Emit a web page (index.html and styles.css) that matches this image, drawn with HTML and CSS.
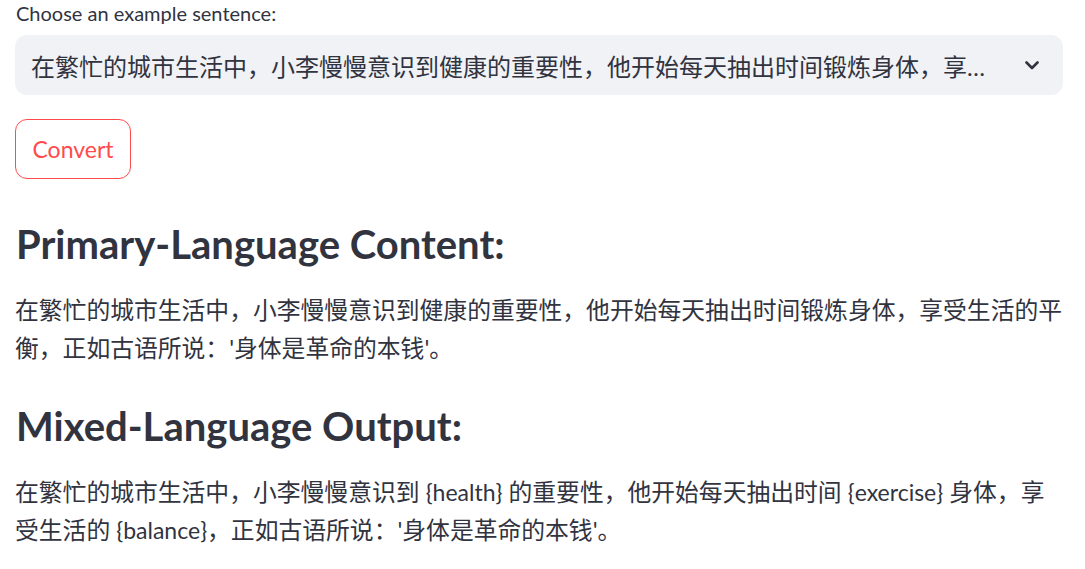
FILE: index.html
```html
<!DOCTYPE html>
<html lang="zh">
<head>
<meta charset="utf-8">
<title>Mixed-Language Converter</title>
<link rel="stylesheet" href="styles.css">
</head>
<body>
<main class="main">
  <div class="field">
    <label class="label">Choose an example sentence:</label>
    <div class="select">
      <span class="select-value">在繁忙的城市生活中，小李慢慢意识到健康的重要性，他开始每天抽出时间锻炼身体，享受生活的平衡，正如古语所说：'身体是革命的本钱'。</span>
      <span class="select-icon">
        <svg width="14" height="9" viewBox="0 0 14 9"><polyline points="1.5,1.5 7,7 12.5,1.5" fill="none" stroke="#31333F" stroke-width="2.6" stroke-linecap="round" stroke-linejoin="round"/></svg>
      </span>
    </div>
  </div>
  <div class="btn-row">
    <button class="btn">Convert</button>
  </div>
  <h3 class="heading first">Primary-Language Content:</h3>
  <p class="para">在繁忙的城市生活中，小李慢慢意识到健康的重要性，他开始每天抽出时间锻炼身体，享受生活的平衡，正如古语所说：'身体是革命的本钱'。</p>
  <h3 class="heading">Mixed-Language Output:</h3>
  <p class="para">在繁忙的城市生活中，小李慢慢意识到 <span class="var">{health}</span> 的重要性，他开始每天抽出时间 <span class="var">{exercise}</span> 身体，享受生活的 <span class="var">{balance}</span>，正如古语所说：'身体是革命的本钱'。</p>
</main>
</body>
</html>
```
FILE: styles.css
```css
html, body {
  margin: 0;
  padding: 0;
  background: #ffffff;
}
body {
  font-family: Lato, "Noto Sans CJK SC", sans-serif;
  color: #31333F;
}
.main {
  padding: 0 22px 0 15px;
}
.field {
  display: flex;
  flex-direction: column;
}
.label {
  font-size: 20px;
  line-height: 26px;
  margin-bottom: 9px;
  padding-left: 1px;
}
.select {
  display: flex;
  align-items: center;
  height: 60px;
  background: #F0F2F6;
  border-radius: 12px;
}
.select-value {
  flex: 1;
  min-width: 0;
  padding-left: 16px;
  font-size: 24px;
  white-space: nowrap;
  overflow: hidden;
  text-overflow: ellipsis;
}
.select-icon {
  width: 62px;
  display: flex;
  justify-content: center;
  align-items: center;
  padding-left: 6px;
}
.btn-row {
  margin-top: 24px;
}
.btn {
  height: 60px;
  width: 116px;
  border: 1px solid #FF4B4B;
  border-radius: 12px;
  background: #ffffff;
  color: #FF4B4B;
  font-family: Lato, sans-serif;
  font-size: 23px;
  padding: 0;
}
.heading {
  font-size: 40px;
  font-weight: 700;
  line-height: 50px;
  margin: 0;
  padding: 0 0 0 1px;
}
.heading.first {
  margin-top: 40px;
}
.para {
  font-size: 23.8px;
  line-height: 38px;
  margin: 22px 0 0 0;
}
.para + .heading {
  margin-top: 34px;
}
.var {
  font-size: 23px;
}
```
